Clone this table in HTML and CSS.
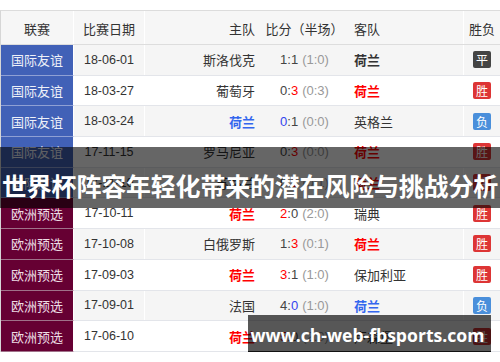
FILE: index.html
```html
<!DOCTYPE html>
<html lang="zh-CN">
<head>
<meta charset="utf-8">
<title>荷兰 比赛记录</title>
<link rel="stylesheet" href="styles.css">
</head>
<body>
<div class="page">
  <div class="table">
    <div class="row head">
      <div class="c league">联赛</div>
      <div class="c date">比赛日期</div>
      <div class="c home">主队</div>
      <div class="c score">比分（半场）</div>
      <div class="c away">客队</div>
      <div class="c res">胜负</div>
    </div>
    <div class="row odd">
      <div class="c league friendly">国际友谊</div>
      <div class="c date">18-06-01</div>
      <div class="c home">斯洛伐克</div>
      <div class="c score"><span class="ft">1:1</span><span class="ht">(1:0)</span></div>
      <div class="c away"><b class="nl">荷兰</b></div>
      <div class="c res"><span class="badge draw">平</span></div>
    </div>
    <div class="row">
      <div class="c league friendly">国际友谊</div>
      <div class="c date">18-03-27</div>
      <div class="c home">葡萄牙</div>
      <div class="c score"><span class="ft">0:<i class="r">3</i></span><span class="ht">(0:3)</span></div>
      <div class="c away"><b class="nl r">荷兰</b></div>
      <div class="c res"><span class="badge win">胜</span></div>
    </div>
    <div class="row odd">
      <div class="c league friendly">国际友谊</div>
      <div class="c date">18-03-24</div>
      <div class="c home"><b class="nl b">荷兰</b></div>
      <div class="c score"><span class="ft"><i class="b">0</i>:1</span><span class="ht">(0:0)</span></div>
      <div class="c away">英格兰</div>
      <div class="c res"><span class="badge loss">负</span></div>
    </div>
    <div class="row">
      <div class="c league friendly">国际友谊</div>
      <div class="c date">17-11-15</div>
      <div class="c home">罗马尼亚</div>
      <div class="c score"><span class="ft">0:<i class="r">3</i></span><span class="ht">(0:0)</span></div>
      <div class="c away"><b class="nl r">荷兰</b></div>
      <div class="c res"><span class="badge win">胜</span></div>
    </div>
    <div class="row odd">
      <div class="c league friendly">国际友谊</div>
      <div class="c date">17-11-10</div>
      <div class="c home">苏格兰</div>
      <div class="c score"><span class="ft">0:<i class="r">1</i></span><span class="ht">(0:1)</span></div>
      <div class="c away"><b class="nl r">荷兰</b></div>
      <div class="c res"><span class="badge win">胜</span></div>
    </div>
    <div class="row">
      <div class="c league euro">欧洲预选</div>
      <div class="c date">17-10-11</div>
      <div class="c home"><b class="nl r">荷兰</b></div>
      <div class="c score"><span class="ft"><i class="r">2</i>:0</span><span class="ht">(2:0)</span></div>
      <div class="c away">瑞典</div>
      <div class="c res"><span class="badge win">胜</span></div>
    </div>
    <div class="row odd">
      <div class="c league euro">欧洲预选</div>
      <div class="c date">17-10-08</div>
      <div class="c home">白俄罗斯</div>
      <div class="c score"><span class="ft">1:<i class="r">3</i></span><span class="ht">(0:1)</span></div>
      <div class="c away"><b class="nl r">荷兰</b></div>
      <div class="c res"><span class="badge win">胜</span></div>
    </div>
    <div class="row">
      <div class="c league euro">欧洲预选</div>
      <div class="c date">17-09-03</div>
      <div class="c home"><b class="nl r">荷兰</b></div>
      <div class="c score"><span class="ft"><i class="r">3</i>:1</span><span class="ht">(1:0)</span></div>
      <div class="c away">保加利亚</div>
      <div class="c res"><span class="badge win">胜</span></div>
    </div>
    <div class="row odd">
      <div class="c league euro">欧洲预选</div>
      <div class="c date">17-09-01</div>
      <div class="c home">法国</div>
      <div class="c score"><span class="ft">4:<i class="b">0</i></span><span class="ht">(1:0)</span></div>
      <div class="c away"><b class="nl b">荷兰</b></div>
      <div class="c res"><span class="badge loss">负</span></div>
    </div>
    <div class="row">
      <div class="c league euro">欧洲预选</div>
      <div class="c date">17-06-10</div>
      <div class="c home"><b class="nl r">荷兰</b></div>
      <div class="c score"><span class="ft"><i class="r">5</i>:0</span><span class="ht">(2:0)</span></div>
      <div class="c away">卢森堡</div>
      <div class="c res"><span class="badge win">胜</span></div>
    </div>
  </div>
  <div class="banner title">世界杯阵容年轻化带来的潜在风险与挑战分析</div>
  <div class="banner url">www.ch-web-fbsports.com</div>
</div>
</body>
</html>
```
FILE: styles.css
```css
* { box-sizing: border-box; }
html, body { margin: 0; padding: 0; background: #fff; }
body {
  width: 500px;
  height: 362px;
  overflow: hidden;
  font-family: "Liberation Sans", "Noto Sans CJK SC", sans-serif;
  font-size: 12px;
  color: #333;
}
.page { position: relative; width: 500px; height: 362px; padding-top: 10px; }
.table {
  width: 500px;
  border-top: 1px solid #dcdcdc;
  border-left: 1px solid #d6d6d6;
}
.row {
  display: grid;
  grid-template-columns: 73px 71px 118px 83px 117px 37px;
  height: 30.7px;
  border-bottom: 1px solid #e3e5ea;
  background: #fff;
}
.row.odd { background: #f5f5f5; }
.row.head {
  height: 34px;
  background: #f6f6f6;
  border-bottom: 1px solid #dddddd;
  font-size: 13px;
}
.c {
  display: flex;
  align-items: center;
  white-space: nowrap;
  font-family: "Noto Sans CJK SC", "Liberation Sans", sans-serif;
}
.head .c { padding-top: 2px; }
.league { justify-content: center; border-right: 1px solid #fff; font-size: 13px; }
.league.friendly { background: #4161b7; color: #eef0f8; border-bottom: 1px solid #8fa0d4; }
.league.euro { background: #660033; color: #ecdde4; border-bottom: 1px solid #a0728a; }
.row .league.friendly, .row .league.euro { margin-bottom: -1px; }
.date {
  justify-content: center;
  border-right: 1px solid #fff;
  font-family: "Liberation Sans", sans-serif;
  font-size: 12.5px;
}
.head .date { font-family: "Noto Sans CJK SC", sans-serif; font-size: 13px; }
.home { justify-content: flex-end; padding-right: 8px; font-size: 13px; }
.score {
  justify-content: center;
  font-family: "Liberation Sans", sans-serif;
  font-size: 13px;
}
.head .score { font-family: "Noto Sans CJK SC", sans-serif; }
.score .ft { color: #444; }
.score .ht { color: #999; margin-left: 4px; }
.score i { font-style: normal; }
.away { padding-left: 8px; font-size: 13px; }
.res { justify-content: center; border-left: 1px solid #fff; font-size: 13px; }
.nl { font-weight: bold; color: #333; }
.r { color: #f00; }
.b { color: #3344ee; }
.nl.b { color: #3366ee; }
.badge {
  display: inline-flex;
  align-items: center;
  justify-content: center;
  width: 18px;
  height: 17px;
  border-radius: 2px;
  color: #fff;
  font-size: 12px;
  font-family: "Noto Sans CJK SC", sans-serif;
}
.badge.draw { background: #444; }
.badge.win { background: #dd3535; }
.badge.loss { background: #4a8fdb; }
.banner {
  position: absolute;
  display: flex;
  align-items: center;
  justify-content: center;
  white-space: nowrap;
  color: #fff;
  font-weight: bold;
}
.title {
  left: 0;
  top: 147px;
  width: 500px;
  height: 61px;
  padding-top: 14px;
  background: rgba(0, 0, 0, 0.6);
  font-family: "Noto Sans CJK SC", sans-serif;
  font-size: 25px;
  letter-spacing: -0.2px;
}
.url {
  left: 248px;
  top: 315px;
  width: 243px;
  height: 37px;
  padding-top: 4px;
  padding-right: 4px;
  background: rgba(0, 0, 0, 0.66);
  border-bottom: 1px solid #111;
  font-family: "Open Sans", sans-serif;
  font-size: 17.6px;
}
```
